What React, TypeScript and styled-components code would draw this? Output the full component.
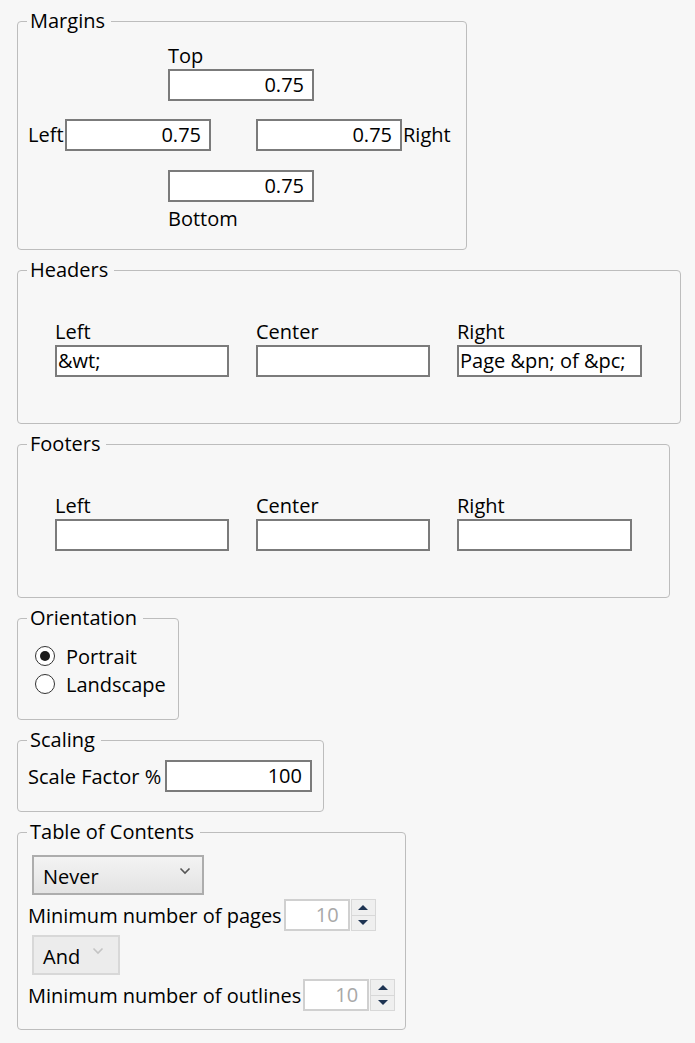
import styled, { createGlobalStyle } from "styled-components";

const GlobalStyle = createGlobalStyle`
  html, body {
    margin: 0;
    background: #f7f7f7;
  }
  body {
    font-family: "Open Sans", "Noto Sans", sans-serif;
    font-size: 20px;
    color: #000;
  }
`;

function Chevron({ color }: { color: string }) {
  return (
    <svg width="12" height="8" viewBox="0 0 12 8">
      <polyline points="1.5,1.5 6,6 10.5,1.5" fill="none" stroke={color} strokeWidth="1.6" />
    </svg>
  );
}

export default function App() {
  return (
    <>
      <GlobalStyle />
      <Page>
        <Group $width={450}>
          <Legend>Margins</Legend>
          <MarginsBody>
            <CenterStack>
              <Label>Top</Label>
              <Field $width={146} $align="right" defaultValue="0.75" />
            </CenterStack>
            <MiddleRow>
              <SideLabel>Left</SideLabel>
              <Field $width={146} $align="right" defaultValue="0.75" />
              <span />
              <Field $width={146} $align="right" defaultValue="0.75" />
              <SideLabel $gap>Right</SideLabel>
            </MiddleRow>
            <CenterStack $bottom>
              <Field $width={146} $align="right" defaultValue="0.75" />
              <Label>Bottom</Label>
            </CenterStack>
          </MarginsBody>
        </Group>

        <Group $width={664}>
          <Legend>Headers</Legend>
          <ColumnsBody>
            <Column>
              <Label>Left</Label>
              <Field $width={174} defaultValue="&wt;" />
            </Column>
            <Column>
              <Label>Center</Label>
              <Field $width={174} defaultValue="" />
            </Column>
            <Column>
              <Label>Right</Label>
              <Field $width={185} defaultValue="Page &pn; of &pc;" />
            </Column>
          </ColumnsBody>
        </Group>

        <Group $width={653}>
          <Legend>Footers</Legend>
          <ColumnsBody>
            <Column>
              <Label>Left</Label>
              <Field $width={174} defaultValue="" />
            </Column>
            <Column>
              <Label>Center</Label>
              <Field $width={174} defaultValue="" />
            </Column>
            <Column>
              <Label>Right</Label>
              <Field $width={175} defaultValue="" />
            </Column>
          </ColumnsBody>
        </Group>

        <Group $width={162}>
          <Legend>Orientation</Legend>
          <RadioBody>
            <RadioRow>
              <Radio $checked />
              <span>Portrait</span>
            </RadioRow>
            <RadioRow>
              <Radio />
              <span>Landscape</span>
            </RadioRow>
          </RadioBody>
        </Group>

        <Group $width={307}>
          <Legend>Scaling</Legend>
          <ScalingBody>
            <span>Scale Factor %</span>
            <Field $width={147} $align="right" defaultValue="100" />
          </ScalingBody>
        </Group>

        <Group $width={389}>
          <Legend>Table of Contents</Legend>
          <TocBody>
            <Dropdown $width={172}>
              <span>Never</span>
              <Chevron color="#555" />
            </Dropdown>
            <SpinRow>
              <span>Minimum number of pages</span>
              <Spinner>
                <SpinField disabled defaultValue="10" />
                <SpinButtons>
                  <SpinHalf><Arrow $up /></SpinHalf>
                  <SpinHalf><Arrow /></SpinHalf>
                </SpinButtons>
              </Spinner>
            </SpinRow>
            <Dropdown $width={88} $disabled>
              <span>And</span>
              <Chevron color="#c4c4c4" />
            </Dropdown>
            <SpinRow>
              <span>Minimum number of outlines</span>
              <Spinner>
                <SpinField disabled defaultValue="10" />
                <SpinButtons>
                  <SpinHalf><Arrow $up /></SpinHalf>
                  <SpinHalf><Arrow /></SpinHalf>
                </SpinButtons>
              </Spinner>
            </SpinRow>
          </TocBody>
        </Group>
      </Page>
    </>
  );
}

const Page = styled.div`
  display: flex;
  flex-direction: column;
  align-items: flex-start;
  gap: 9px;
  padding: 10px 0 0 17px;
`;

const Group = styled.fieldset<{ $width: number }>`
  margin: 0;
  padding: 0;
  min-inline-size: 0;
  width: ${(p) => p.$width}px;
  box-sizing: border-box;
  border: 1px solid #bdbdbd;
  border-radius: 4px;
`;

const Legend = styled.legend`
  margin-left: 9px;
  padding: 0 6px 0 3px;
  font-size: 20px;
  line-height: 22px;
`;

const Label = styled.span`
  display: block;
  padding-top: 4px;
  line-height: 20px;
`;

const SideLabel = styled.span<{ $gap?: boolean }>`
  margin-left: ${(p) => (p.$gap ? "1px" : "0")};
  line-height: 24px;
`;

const Field = styled.input<{ $width: number; $align?: "left" | "right" }>`
  box-sizing: border-box;
  width: ${(p) => p.$width}px;
  height: 32px;
  margin: 0;
  padding: 0 ${(p) => (p.$align === "right" ? "8px" : "1px")} 2px;
  border: 2px solid #7b7b7b;
  border-radius: 0;
  background: #fff;
  font: inherit;
  color: #000;
  text-align: ${(p) => p.$align ?? "left"};
  outline: none;
`;

const MarginsBody = styled.div`
  display: flex;
  flex-direction: column;
  align-items: flex-start;
  padding: 10px 0 20px 10px;
`;

const CenterStack = styled.div<{ $bottom?: boolean }>`
  display: flex;
  flex-direction: column;
  gap: 3px;
  margin-left: 140px;
  margin-top: ${(p) => (p.$bottom ? "19px" : "0")};
`;

const MiddleRow = styled.div`
  display: grid;
  grid-template-columns: 37px 146px 45px 146px auto;
  align-items: center;
  margin-top: 18px;
`;

const ColumnsBody = styled.div`
  display: flex;
  gap: 27px;
  padding: 37px 0 46px 37px;
`;

const Column = styled.div`
  display: flex;
  flex-direction: column;
  gap: 3px;
`;

const RadioBody = styled.div`
  display: flex;
  flex-direction: column;
  padding: 13px 0 21px 17px;
`;

const RadioRow = styled.label`
  display: flex;
  align-items: center;
  gap: 11px;
  height: 28px;
`;

const Radio = styled.span<{ $checked?: boolean }>`
  box-sizing: border-box;
  width: 20px;
  height: 20px;
  border-radius: 50%;
  border: 1.5px solid #333;
  background: #fff;
  display: flex;
  align-items: center;
  justify-content: center;

  &::after {
    content: "";
    width: 10px;
    height: 10px;
    border-radius: 50%;
    background: ${(p) => (p.$checked ? "#1b1b1b" : "transparent")};
  }
`;

const ScalingBody = styled.div`
  display: grid;
  grid-template-columns: 137px auto;
  align-items: center;
  padding: 9px 0 19px 10px;
`;

const TocBody = styled.div`
  display: flex;
  flex-direction: column;
  align-items: flex-start;
  gap: 4px;
  padding: 12px 0 18px 10px;
`;

const Dropdown = styled.div<{ $width: number; $disabled?: boolean }>`
  box-sizing: border-box;
  width: ${(p) => p.$width}px;
  height: 40px;
  margin-left: 4px;
  display: flex;
  align-items: center;
  justify-content: space-between;
  padding: 0 ${(p) => (p.$disabled ? "14px" : "11px")} 0 9px;
  border: 2px solid ${(p) => (p.$disabled ? "#d8d8d8" : "#adadad")};
  background: ${(p) =>
    p.$disabled ? "#ececec" : "linear-gradient(#f3f3f3, #e3e3e3)"};

  span {
    padding-top: 2px;
  }

  svg {
    margin-top: -8px;
  }
`;

const SpinRow = styled.div`
  display: flex;
  align-items: center;
  gap: 2px;
`;

const Spinner = styled.div`
  display: flex;
  gap: 1px;
`;

const SpinField = styled.input`
  box-sizing: border-box;
  width: 66px;
  height: 32px;
  margin: 0;
  padding: 0 9px 2px;
  border: 2px solid #d0d0d0;
  border-radius: 0;
  background: #fff;
  font: inherit;
  color: #a8a8a8;
  text-align: right;
  outline: none;
`;

const SpinButtons = styled.div`
  display: flex;
  flex-direction: column;
  width: 25px;
  height: 32px;
`;

const SpinHalf = styled.div`
  flex: 1;
  display: flex;
  align-items: center;
  justify-content: center;
  border: 1px solid #d8d8d8;
  background: #efefef;

  & + & {
    border-top: none;
  }
`;

const Arrow = styled.span<{ $up?: boolean }>`
  width: 0;
  height: 0;
  border-left: 5px solid transparent;
  border-right: 5px solid transparent;
  ${(p) =>
    p.$up
      ? "border-bottom: 5px solid #1d3352;"
      : "border-top: 5px solid #1d3352;"}
`;
